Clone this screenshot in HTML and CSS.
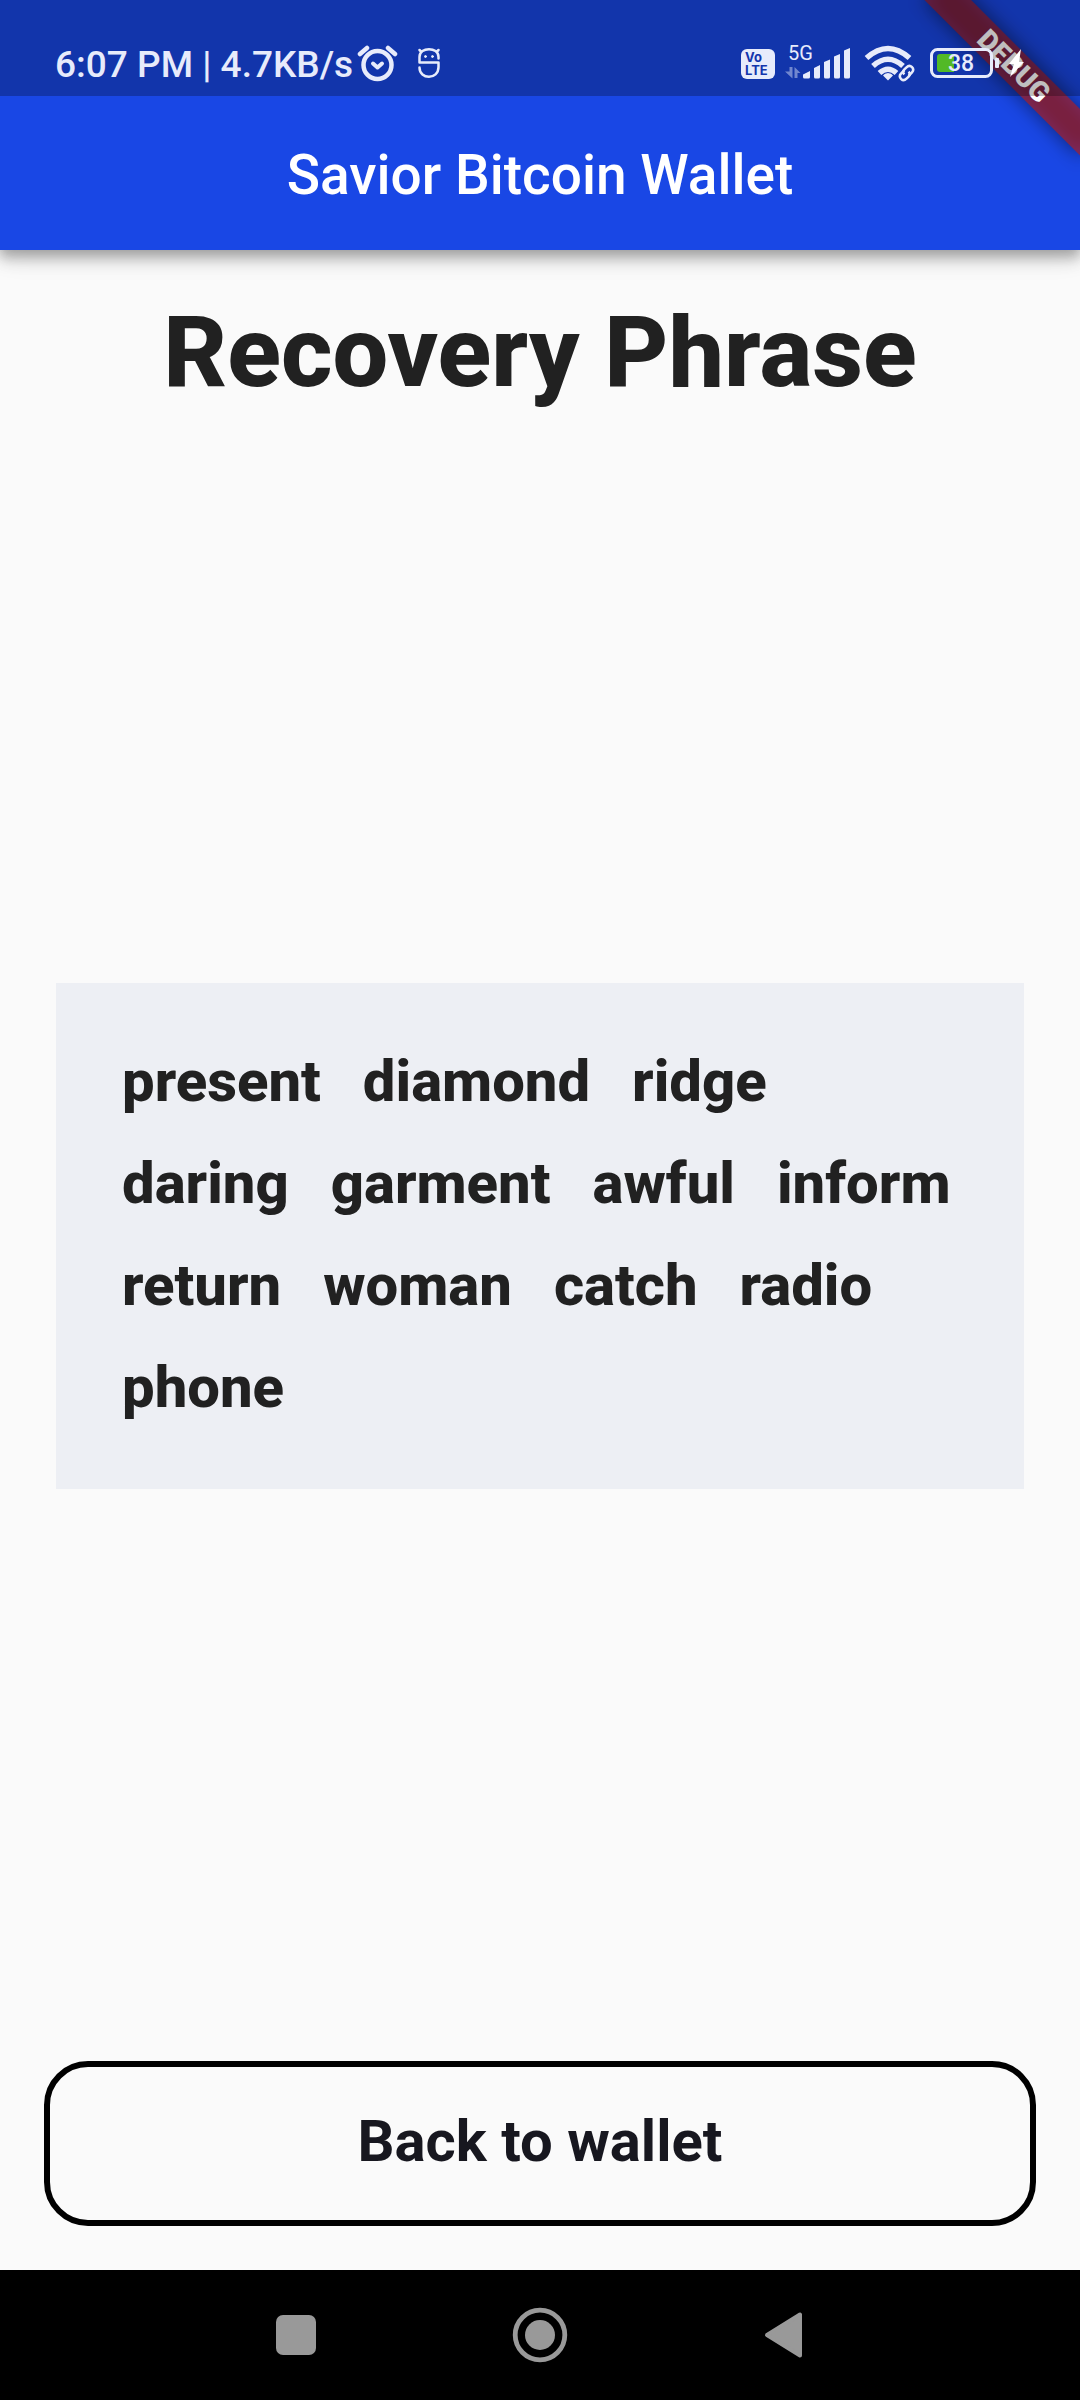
FILE: index.html
```html
<!DOCTYPE html>
<html lang="en">
<head>
<meta charset="utf-8">
<meta name="viewport" content="width=device-width, initial-scale=1">
<title>Savior Bitcoin Wallet</title>
<link rel="stylesheet" href="styles.css">
</head>
<body>
<div class="screen">
  <header class="app-header">
    <div class="debug-corner"><div class="debug-banner">DEBUG</div></div>
    <div class="status-bar">
      <span class="status-text">6:07 PM | 4.7KB/s</span>
      <svg class="icon-alarm" width="44" height="40" viewBox="0 0 44 40" fill="none" stroke="currentColor" stroke-linecap="round" stroke-linejoin="round" aria-label="Alarm">
        <circle cx="21.500" cy="20" r="14" stroke-width="4.500"/>
        <path d="M4 9L11 3M39 9L32 3" stroke-width="4.500"/>
        <path d="M17 18.500L21.500 22.500L26 18.500" stroke-width="4"/>
      </svg>
      <svg class="icon-bug" width="26" height="40" viewBox="0 1 26 40" fill="none" stroke="currentColor" stroke-width="2.500" stroke-linecap="round" stroke-linejoin="round" aria-label="Debugging">
        <path d="M22.500 14.500V13C22.500 2.500 3.500 2.500 3.500 13V18.500H22.500V23C22.500 36 3.500 36 3.500 23.500M5.500 8L3.500 6M20.500 8L22.500 6"/>
        <circle cx="9.500" cy="12.500" r="1" fill="currentColor" stroke-width="1"/>
        <circle cx="16.500" cy="12.500" r="1" fill="currentColor" stroke-width="1"/>
      </svg>
      <div class="status-right">
        <div class="volte"><span>Vo</span><span>LTE</span></div>
        <svg width="68" height="52" viewBox="0 -5 68 52" fill="currentColor" aria-label="5G signal">
          <text class="network" x="4" y="16">5G</text>
          <path opacity=".45" d="M5.500 23H8.500V34.500L1 27.500H5.500ZM10.500 34V23L16.500 29H13.500V34Z"/>
          <path d="M19 33V30.500L26 27V33Q26 34.500 24.500 34.500H20.500Q19 34.500 19 33ZM30 33V24L36 21V33Q36 34.500 34.500 34.500H31.500Q30 34.500 30 33ZM40 33V18L46 15.500V33Q46 34.500 44.500 34.500H41.500Q40 34.500 40 33ZM50 33V12.500L56 10V33Q56 34.500 54.500 34.500H51.500Q50 34.500 50 33ZM60 33V6.500L66 4V33Q66 34.500 64.500 34.500H61.500Q60 34.500 60 33Z"/>
        </svg>
        <svg class="icon-wifi" width="52" height="40" viewBox="0 1 52 40" fill="none" stroke="currentColor" aria-label="Wi-Fi">
          <path d="M2.500 14Q24 -5 45.500 14" stroke-width="5.500"/>
          <path d="M9 22Q24 8.500 39 22" stroke-width="5.500"/>
          <path d="M15.500 29Q24 21.500 32.500 29" stroke-width="5.500"/>
          <path d="M24 29Q20.500 29 19 31.500L24 36.500L29 31.500Q27.500 29 24 29Z" fill="currentColor" stroke="none"/>
          <g transform="rotate(-45 42.500 29)" stroke-width="2.500">
            <path d="M43 25.500H38.500Q34.500 25.500 34.500 29.500Q34.500 33 38.500 33H41.500Q45 33 45 29.500"/>
            <path d="M42 32.500H46.500Q50.500 32.500 50.500 28.500Q50.500 25 46.500 25H43.500Q40 25 40 28.500"/>
          </g>
        </svg>
        <svg width="96" height="40" viewBox="0 1 96 40" fill="currentColor" aria-label="Battery 38 percent, charging">
          <rect x="1.500" y="5.500" width="60" height="27" rx="6" fill="none" stroke="currentColor" stroke-width="3"/>
          <path d="M10 10H24V28H10Q7 28 7 25V13Q7 10 10 10Z" fill="#52b927"/>
          <text class="level" x="18" y="27">38</text>
          <rect x="65" y="14" width="4" height="10" rx="1"/>
          <path d="M91 5L79 20H84L80 33L94 18H89Z" fill="#fff"/>
        </svg>
      </div>
    </div>
    <div class="app-title">Savior Bitcoin Wallet</div>
  </header>

  <main class="content">
    <h1 class="heading">Recovery Phrase</h1>
    <ul class="phrase">
      <li>present</li>
      <li>diamond</li>
      <li>ridge</li>
      <li>daring</li>
      <li>garment</li>
      <li>awful</li>
      <li>inform</li>
      <li>return</li>
      <li>woman</li>
      <li>catch</li>
      <li>radio</li>
      <li>phone</li>
    </ul>
    <button class="back-button" type="button">Back to wallet</button>
  </main>

  <nav class="system-nav">
    <button class="nav-button" type="button" aria-label="Recent apps">
      <svg width="60" height="60" viewBox="0 0 60 60" fill="currentColor"><rect x="10" y="10" width="40" height="40" rx="7"/></svg>
    </button>
    <button class="nav-button" type="button" aria-label="Home">
      <svg width="60" height="60" viewBox="0 0 60 60" fill="currentColor"><circle cx="30" cy="30" r="24.800" fill="none" stroke="currentColor" stroke-width="4.800"/><circle cx="30" cy="30" r="15"/></svg>
    </button>
    <button class="nav-button" type="button" aria-label="Back">
      <svg width="60" height="60" viewBox="0 0 60 60" fill="currentColor" stroke="currentColor" stroke-width="4" stroke-linejoin="round"><path d="M46 9.500V50.500L13 30Z"/></svg>
    </button>
  </nav>
</div>
</body>
</html>
```
FILE: styles.css
```css
* {
  box-sizing: border-box;
}

body {
  margin: 0;
  background: #fafafa;
  color: #212121;
  font-family: Roboto, "Noto Sans", sans-serif;
}

svg {
  display: block;
  flex: none;
}

.screen {
  display: flex;
  flex-direction: column;
  min-height: 100vh;
}

.app-header {
  position: relative;
  background: #1947e5;
  box-shadow: 0 5px 11px rgba(0, 0, 0, 0.2), 0 11px 14px rgba(0, 0, 0, 0.14), 0 3px 28px rgba(0, 0, 0, 0.12);
  clip-path: inset(0 0 -60px 0);
}

/* Corner ribbon, drawn under the status bar tint */
.debug-corner {
  position: absolute;
  top: 0;
  right: 0;
  width: 220px;
  height: 220px;
  overflow: hidden;
}

.debug-banner {
  position: absolute;
  top: 77px;
  right: -110px;
  width: 220px;
  height: 33px;
  transform: rotate(45deg);
  transform-origin: 110px -77px;
  color: #fff;
  font-size: 28px;
  font-weight: 900;
  line-height: 33px;
  text-align: center;
}

.debug-banner::before,
.debug-banner::after {
  content: "";
  position: absolute;
  inset: 0;
  z-index: -1;
}

.debug-banner::before {
  background: rgba(0, 0, 0, 0.5);
  filter: blur(10px);
}

.debug-banner::after {
  background: rgba(183, 28, 28, 0.63);
}

.status-bar {
  position: relative;
  display: flex;
  align-items: center;
  height: 96px;
  padding: 34px 54px 0 55px;
  background: rgba(0, 0, 0, 0.25);
  color: #e7ebfb;
}

.status-text {
  font-size: 37px;
  font-weight: 500;
  line-height: 44px;
  white-space: nowrap;
}

.icon-alarm {
  margin-left: 3px;
}

.icon-bug {
  margin-left: 16px;
}

.status-right {
  display: flex;
  align-items: center;
  margin-left: auto;
}

.volte {
  display: flex;
  flex-direction: column;
  width: 34px;
  height: 30px;
  margin: 0 9px 2px 0;
  padding: 2px 0 0 4px;
  border-radius: 6px;
  background: #e7ebfb;
  color: #1435ac;
  font-family: Inter, sans-serif;
  font-size: 13px;
  font-weight: 700;
  line-height: 13px;
}

.network {
  font-size: 20px;
}

.icon-wifi {
  margin: 0 14px 0 12px;
}

.level {
  font-size: 23px;
  font-weight: 500;
}

.app-title {
  display: flex;
  align-items: center;
  justify-content: center;
  height: 154px;
  padding-top: 4px;
  color: #fff;
  font-size: 55px;
  font-weight: 500;
}

.content {
  display: flex;
  flex: 1;
  flex-direction: column;
  justify-content: space-between;
  padding: 44px;
}

.heading {
  margin: 0;
  font-size: 99px;
  font-weight: 800;
  line-height: 116px;
  text-align: center;
}

.phrase {
  display: flex;
  flex-wrap: wrap;
  gap: 34px 42px;
  margin: 0 12px;
  padding: 64px 66px 68px;
  background: #edeff4;
  font-size: 58px;
  font-weight: 800;
  line-height: 68px;
  list-style: none;
}

.back-button {
  height: 165px;
  padding: 0 0 6px;
  border: 6px solid #000;
  border-radius: 44px;
  background: transparent;
  color: #17171f;
  font-family: inherit;
  font-size: 58px;
  font-weight: 700;
}

.system-nav {
  display: flex;
  align-items: center;
  justify-content: center;
  gap: 184px;
  height: 130px;
  background: #000;
}

.nav-button {
  padding: 0;
  border: 0;
  background: none;
  color: #999;
}
```
